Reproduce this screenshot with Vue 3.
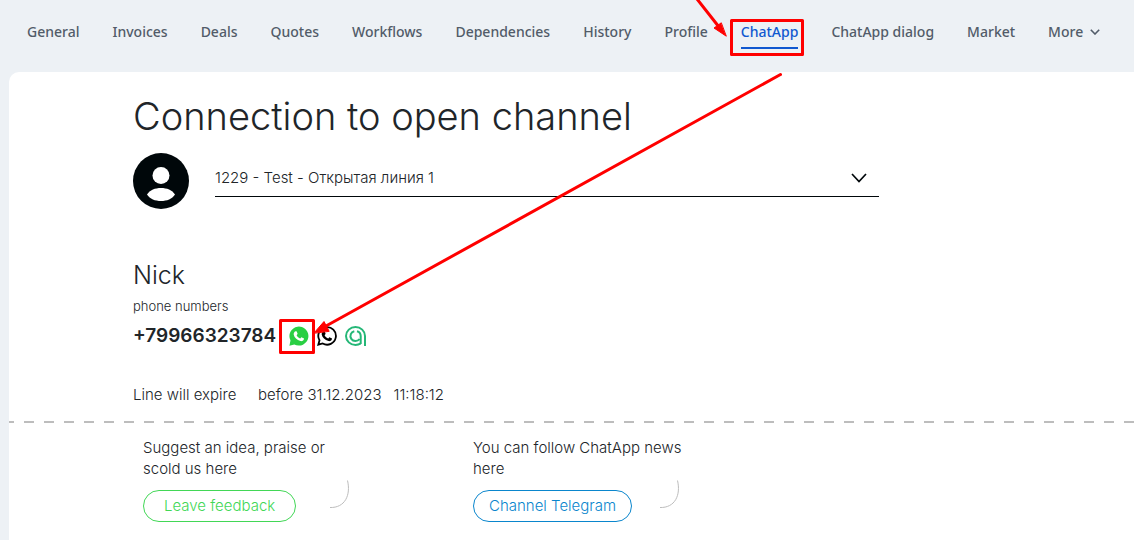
<script setup>
import { ref } from 'vue'

const tabs = ['General', 'Invoices', 'Deals', 'Quotes', 'Workflows', 'Dependencies', 'History', 'Profile', 'ChatApp', 'ChatApp dialog', 'Market']
const active = ref('ChatApp')
const line = ref('1229 - Test - Открытая линия 1')
const cards = [
  { text: 'Suggest an idea, praise or scold us here', action: 'Leave feedback', tone: 'green' },
  { text: 'You can follow ChatApp news here', action: 'Channel Telegram', tone: 'blue' }
]
</script>

<template>
  <div class="page">
    <nav class="tabs" aria-label="Sections">
      <a v-for="tab in tabs" :key="tab" href="#" class="tab" :class="{ active: tab === active }" @click.prevent="active = tab">{{ tab }}</a>
      <button type="button" class="tab more">
        More
        <svg width="10" height="6" viewBox="0 0 10 6" aria-hidden="true"><path d="M.8.8 5 5 9.200.8" /></svg>
      </button>
    </nav>

    <main class="card">
      <section class="content">
        <h1>Connection to open channel</h1>
        <div class="channel">
          <svg class="avatar" width="56" height="56" viewBox="0 0 56 56" aria-hidden="true">
            <circle cx="28" cy="28" r="28" fill="#00070a" />
            <circle cx="28" cy="22.500" r="8.500" fill="#fff" />
            <path d="M14 41.500C17 37 22 35 28 35s11 2 14 6.500C39 46 34 48 28 48s-11-2-14-6.500Z" fill="#fff" />
          </svg>
          <div class="select-wrap">
            <select v-model="line" aria-label="Open channel">
              <option>1229 - Test - Открытая линия 1</option>
            </select>
            <svg class="chevron" width="16" height="10" viewBox="0 0 16 10" aria-hidden="true"><path d="m1 1 7 7.500L15 1" /></svg>
          </div>
        </div>

        <h2>Nick</h2>
        <p class="caption">phone numbers</p>
        <div class="phone">
          <span class="number">+79966323784</span>
          <a href="#" aria-label="WhatsApp">
            <svg width="20" height="20" viewBox="0 0 20 20">
              <path d="M.4 19.700 1.500 14.500A9.500 9.500 0 1 1 5.300 18.400Z" fill="#29cf43" />
              <path d="M6.900 5.200c.5 0 .7.100.9.600l.7 1.700c.2.400-.1.800-.9 1.700.9 1.700 2 2.700 3.700 3.400.8-1 1-1.400 1.500-1.200l1.900.9c.4.200.3.700.1 1.300-.5 1.200-2 1.800-3.300 1.500-3.600-.9-6.200-3.600-6.800-6.600-.2-1.300.7-3.300 2.200-3.300Z" fill="#fff" />
            </svg>
          </a>
          <a href="#" aria-label="WhatsApp Business">
            <svg width="20" height="20" viewBox="0 0 20 20">
              <path d="M1.300 18.700 2.500 14.300A8.800 8.800 0 1 1 5.700 17.500Z" fill="none" stroke="#000" stroke-width="1.800" />
              <path d="M6.900 5.200c.5 0 .7.100.9.600l.7 1.700c.2.400-.1.800-.9 1.700.9 1.700 2 2.700 3.700 3.400.8-1 1-1.400 1.500-1.200l1.900.9c.4.200.3.700.1 1.300-.5 1.200-2 1.800-3.300 1.500-3.600-.9-6.200-3.600-6.800-6.600-.2-1.300.7-3.300 2.200-3.300Z" fill="#000" />
            </svg>
          </a>
          <a href="#" aria-label="Avito">
            <svg width="21" height="20" viewBox="0 0 21 20" fill="none" stroke="#25b777" stroke-width="2">
              <path d="M20 20V10A9.500 9 0 1 0 10.500 19c2 0 3.600-.4 5-1.300" />
              <path d="M15.700 18V10A5 5 0 0 0 12 5.200M9.300 5.200A5 5 0 1 0 14.500 13" />
            </svg>
          </a>
        </div>
        <p class="expiry"><span>Line will expire</span><span>before 31.12.2023</span><span>11:18:12</span></p>
      </section>

      <div class="divider"></div>

      <section class="links">
        <article v-for="card in cards" :key="card.action" class="link-card">
          <p>{{ card.text }}</p>
          <button type="button" :class="card.tone">{{ card.action }}</button>
          <svg class="curve" width="20" height="29" viewBox="0 0 20 29" aria-hidden="true"><path d="M17.500.5C21 15 15 28 0 27.500" /></svg>
        </article>
      </section>
    </main>

    <svg class="marks" width="810" height="360" viewBox="0 0 810 360" aria-hidden="true">
      <rect x="731.500" y="20.500" width="71" height="34" />
      <rect x="280.500" y="320.500" width="33" height="32" />
      <path d="M697-1 719 27M780.500 74.500 326 326" />
      <path class="head" d="M726 36 714 28 721 23Z" />
      <path class="head" d="M314 333 324 321.500 329 331Z" />
    </svg>
  </div>
</template>

<style>
body { margin: 0; background: #edf1f5; }
</style>

<style scoped>
* { box-sizing: border-box; }
.page {
  position: relative;
  display: flex;
  flex-direction: column;
  min-height: 100vh;
  overflow: hidden;
  background: #edf1f5;
  color: #212529;
  font-family: Inter, "Liberation Sans", sans-serif;
}
.tabs {
  display: flex;
  align-items: center;
  gap: 33px;
  height: 72px;
  padding: 0 27px 8px;
  font: 500 14px/20px "Noto Sans", "Open Sans", sans-serif;
}
.tab {
  position: relative;
  color: #525c69;
  text-decoration: none;
  white-space: nowrap;
}
.tab.active { color: #1058d0; }
.tab.active::after {
  content: "";
  position: absolute;
  left: 0;
  right: 0;
  bottom: -7px;
  height: 2px;
  background: #1058d0;
}
.more {
  display: flex;
  align-items: center;
  gap: 7px;
  padding: 0;
  border: 0;
  background: none;
  font: inherit;
}
.more svg, .chevron { fill: none; stroke: #525c69; stroke-width: 1.600; }
.card {
  flex: 1;
  margin-left: 9px;
  background: #fff;
  border-top-left-radius: 10px;
}
.content {
  max-width: 870px;
  padding: 22px 0 16px 124px;
}
h1, h2, p { margin: 0; font-weight: 300; }
h1 { font-size: 38px; line-height: 45px; white-space: nowrap; }
.channel { display: flex; gap: 26px; margin-top: 14px; }
.avatar { flex: none; }
.select-wrap { position: relative; flex: 1; height: 44px; border-bottom: 1px solid #00070a; }
select {
  width: 100%;
  height: 43px;
  padding: 7px 40px 0 0;
  border: 0;
  appearance: none;
  background: none;
  color: #212529;
  font: 300 15px/20px Inter, sans-serif;
}
.chevron { position: absolute; right: 12px; top: 20px; stroke: #00070a; stroke-width: 1.700; pointer-events: none; }
h2 { margin-top: 50px; font-size: 25px; line-height: 32px; }
.caption { margin-top: 6px; font-size: 13px; line-height: 18px; }
.phone { display: flex; align-items: center; gap: 8px; height: 24px; margin-top: 9px; }
.phone a, .phone svg { display: block; }
.number { min-width: 148px; font-size: 19px; font-weight: 600; line-height: 24px; }
.expiry { display: flex; gap: 12px; margin-top: 36px; font-size: 15px; line-height: 21px; }
.expiry span:first-child { min-width: 113px; }
.divider {
  height: 2px;
  background: repeating-linear-gradient(90deg, #bdbdbd 0 5px, transparent 5px 15px, #bdbdbd 15px 20px);
}
.links { display: flex; padding: 14px 0 18px 134px; }
.link-card { position: relative; width: 330px; }
.link-card p { width: 210px; font-size: 15px; line-height: 21px; }
.link-card button {
  height: 32px;
  margin-top: 11px;
  padding: 0 20px;
  border: 1px solid;
  border-radius: 16px;
  background: #fff;
  font: 300 15px/20px Inter, sans-serif;
}
.link-card .green { color: #42d756; }
.link-card .blue { padding: 0 15px; color: #0a86cd; }
.curve { position: absolute; left: 187px; top: 43px; fill: none; stroke: #bdbdbd; }
.marks { position: absolute; top: 0; left: 0; fill: none; stroke: #f00; stroke-width: 3; stroke-linecap: round; stroke-linejoin: round; pointer-events: none; }
.marks .head { fill: #f00; stroke-width: 1; }
</style>
